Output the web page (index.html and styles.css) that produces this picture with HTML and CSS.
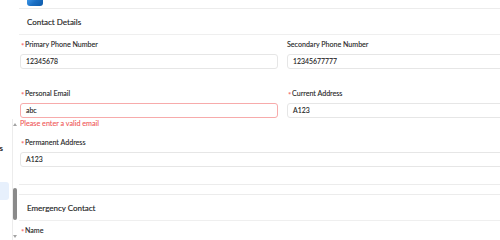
FILE: index.html
```html
<!DOCTYPE html>
<html lang="en">
<head>
<meta charset="utf-8">
<title>Contact Details</title>
<link rel="stylesheet" href="styles.css">
</head>
<body>
<div class="app">
  <aside class="sidebar">
    <div class="side-text"><span>Documents</span></div>
    <div class="side-active"></div>
  </aside>
  <div class="scroll">
    <div class="scroll-track">
      <span class="arrow-up"></span>
      <span class="thumb"></span>
      <span class="arrow-down"></span>
    </div>
  </div>
  <main class="main">
    <div class="top-logo"></div>

    <section class="card">
      <header class="card-head">Contact Details</header>
      <div class="card-body">
        <div class="form-grid">
          <div class="field">
            <label class="label"><span class="req">*</span>Primary Phone Number</label>
            <div class="input">12345678</div>
            <div class="msg"></div>
          </div>
          <div class="field">
            <label class="label label--plain">Secondary Phone Number</label>
            <div class="input">12345677777</div>
            <div class="msg"></div>
          </div>
          <div class="field">
            <label class="label"><span class="req">*</span>Personal Email</label>
            <div class="input input--error">abc</div>
            <div class="msg msg--error">Please enter a valid email</div>
          </div>
          <div class="field">
            <label class="label"><span class="req">*</span>Current Address</label>
            <div class="input">A123</div>
            <div class="msg"></div>
          </div>
          <div class="field field--full">
            <label class="label"><span class="req">*</span>Permanent Address</label>
            <div class="input">A123</div>
          </div>
        </div>
      </div>
    </section>

    <section class="card card--next">
      <header class="card-head">Emergency Contact</header>
      <div class="card-body">
        <div class="form-grid">
          <div class="field">
            <label class="label"><span class="req">*</span>Name</label>
          </div>
        </div>
      </div>
    </section>
  </main>
</div>
</body>
</html>
```

FILE: styles.css
```css
html, body {
  margin: 0;
  padding: 0;
  background: #ffffff;
}

body {
  width: 500px;
  height: 240px;
  overflow: hidden;
  font-family: Lato, "Noto Sans", "Liberation Sans", sans-serif;
  color: #2a2a2a;
}

.app {
  display: flex;
  height: 240px;
}

/* sidebar */
.sidebar {
  width: 12px;
  flex: none;
  display: flex;
  flex-direction: column;
  overflow: hidden;
}

.side-text {
  margin-top: 143px;
  height: 10px;
  line-height: 10px;
  display: flex;
  justify-content: flex-end;
  padding-right: 9px;
  font-size: 8px;
  font-weight: 700;
  color: #2b2b2b;
  white-space: nowrap;
}

.side-active {
  margin-top: 29px;
  width: 9px;
  height: 18px;
  background: #e7f0fc;
  border-radius: 0 3px 3px 0;
}

/* scrollbar */
.scroll {
  width: 7px;
  flex: none;
  display: flex;
  flex-direction: column;
}

.scroll-track {
  margin-top: 119px;
  flex: 1;
  border-left: 1px solid #ececec;
  display: flex;
  flex-direction: column;
  align-items: flex-start;
}

.arrow-up {
  flex: none;
  margin-top: 4px;
  width: 0;
  height: 0;
  border-left: 2.5px solid transparent;
  border-right: 2.5px solid transparent;
  border-bottom: 3px solid #a3a3a3;
}

.thumb {
  flex: none;
  margin-top: 62px;
  width: 4px;
  height: 32px;
  background: #8a8a8a;
  border-radius: 2px;
}

.arrow-down {
  flex: none;
  margin-top: 15px;
  width: 0;
  height: 0;
  border-left: 2.5px solid transparent;
  border-right: 2.5px solid transparent;
  border-top: 3px solid #a3a3a3;
}

/* main */
.main {
  flex: none;
  width: 560px;
}

.top-logo {
  margin-left: 8px;
  width: 16px;
  height: 6px;
  border-radius: 0 0 3px 3px;
  background: linear-gradient(135deg, #3b95e6 0%, #1b6fc4 45%, #0d5aa8 100%);
}

.card {
  margin-top: 2px;
  background: #ffffff;
  border-top: 1px solid #ececec;
  border-bottom: 1px solid #ececec;
}

.card--next {
  margin-top: 9px;
}

.card-head {
  height: 25px;
  padding-left: 8px;
  display: flex;
  align-items: center;
  font-size: 8px;
  color: #1f1f1f;
  -webkit-text-stroke: 0.15px #1f1f1f;
  border-bottom: 1px solid #efefef;
}

.card-body {
  padding: 5px 0 0 1px;
}

.form-grid {
  display: grid;
  grid-template-columns: 258px 258px;
  column-gap: 9px;
}

.field--full {
  grid-column: 1 / -1;
  padding-bottom: 17px;
}

.label {
  display: block;
  height: 9px;
  line-height: 9px;
  padding-left: 1px;
  margin-bottom: 5px;
  font-size: 7.1px;
  color: #262626;
  -webkit-text-stroke: 0.1px #262626;
  white-space: nowrap;
}

.label--plain {
  padding-left: 0;
}

.req {
  display: inline-block;
  width: 4px;
  font-size: 8px;
  font-weight: 700;
  vertical-align: -2px;
  line-height: 9px;
  color: #f56c6c;
  -webkit-text-stroke: 0;
}

.input {
  box-sizing: border-box;
  height: 15px;
  line-height: 13px;
  padding-left: 5px;
  border: 1px solid #e6e6e6;
  border-radius: 3px;
  background: #ffffff;
  font-size: 6.9px;
  color: #222222;
  -webkit-text-stroke: 0.1px #222222;
  white-space: nowrap;
}

.input--error {
  border-color: #f7abab;
}

.msg {
  height: 20px;
}

.msg--error {
  box-sizing: border-box;
  padding-top: 1px;
  line-height: 10px;
  font-size: 7.2px;
  color: #f05a5a;
  -webkit-text-stroke: 0.1px #f05a5a;
  white-space: nowrap;
}
```
